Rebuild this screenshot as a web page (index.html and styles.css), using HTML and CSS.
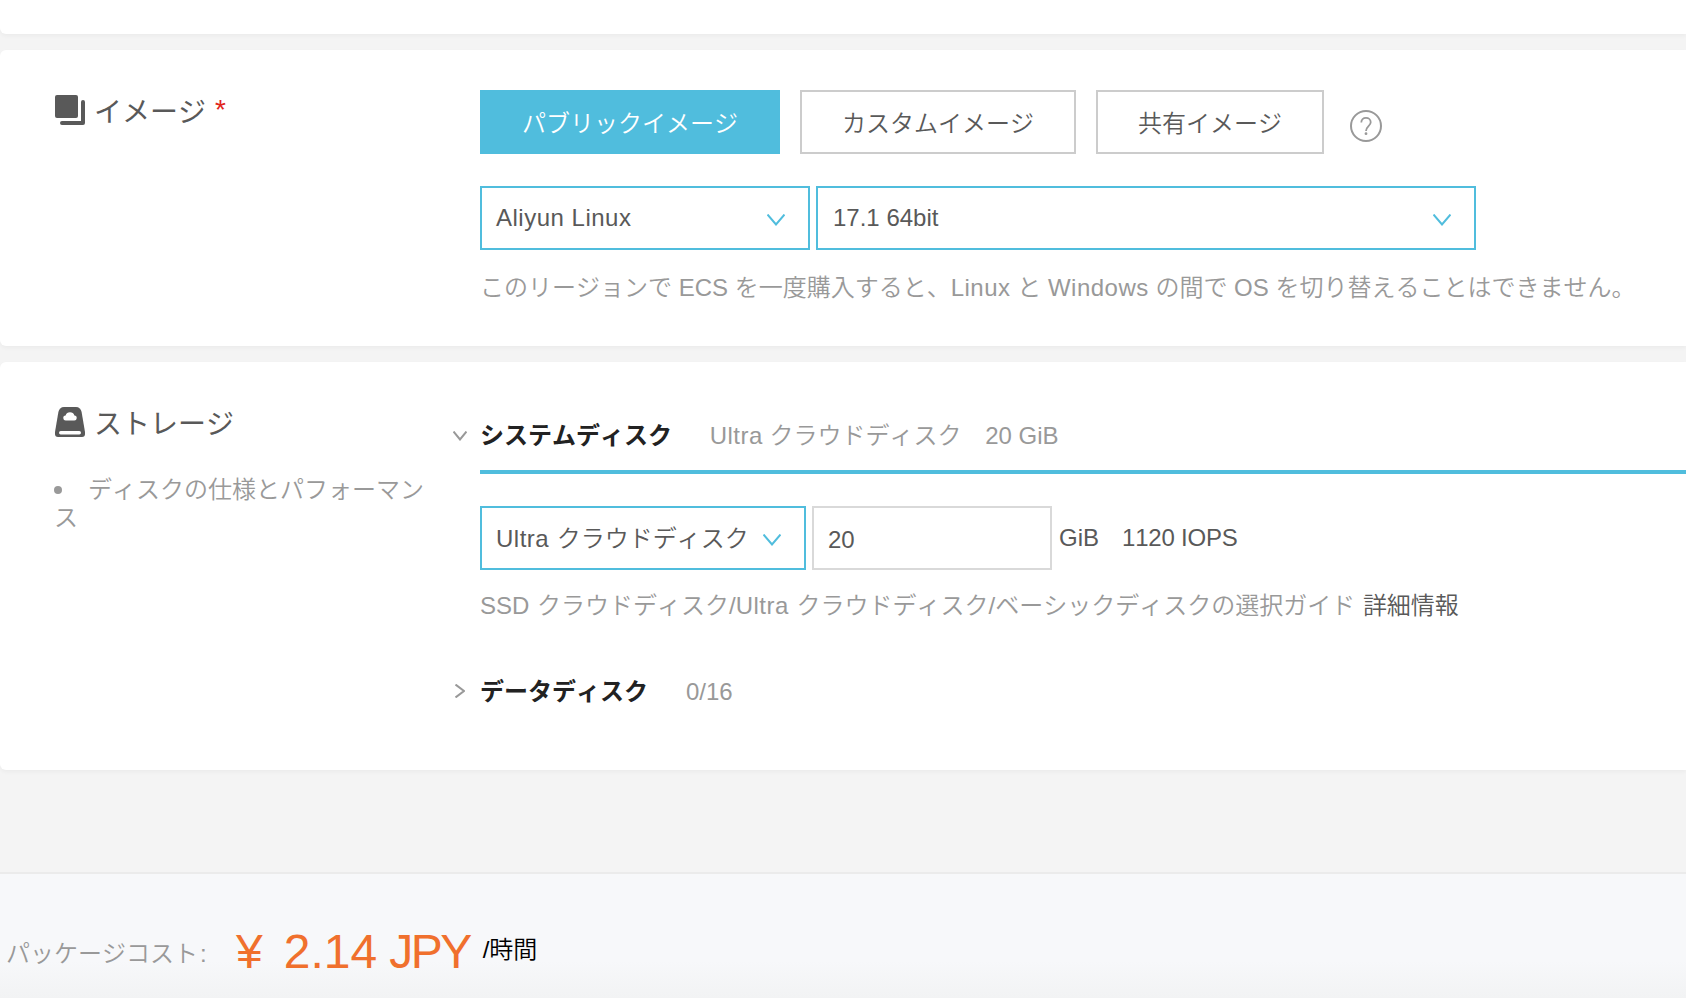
FILE: index.html
```html
<!DOCTYPE html>
<html lang="ja">

<head>
    <meta charset="UTF-8">
    <meta name="viewport" content="width=device-width, initial-scale=1.0">
    <title>ECS 購入</title>
    <link rel="stylesheet" href="styles.css">
</head>

<body>

    <div class="card card-prev"></div>

    <!-- イメージ -->
    <div class="card card-image">
        <div class="label">
            <h2 class="title">
                <svg class="title-icon" width="30" height="30" viewBox="0 0 30 30">
                    <rect x="0" y="0" width="23" height="23" rx="2" fill="#595959"/>
                    <path d="M28 7v21H7" fill="none" stroke="#595959" stroke-width="4" stroke-linecap="round" stroke-linejoin="round"/>
                </svg>
                <span>イメージ</span>
                <span class="required">*</span>
            </h2>
        </div>
        <div class="content">
            <div class="buttons">
                <button class="btn btn-active">パブリックイメージ</button>
                <button class="btn">カスタムイメージ</button>
                <button class="btn">共有イメージ</button>
                <svg class="help" width="32" height="32" viewBox="0 0 32 32" fill="none" stroke="#999" stroke-width="2">
                    <circle cx="16" cy="16" r="15"/>
                    <path d="M11.3 12.6c0-3 2-4.7 4.7-4.7s4.7 1.8 4.7 4.3c0 3.8-4.7 4.3-4.7 8.9" stroke-width="1.8"/>
                    <circle cx="16" cy="23.7" r="1.4" fill="#999" stroke="none"/>
                </svg>
            </div>
            <div class="fields">
                <div class="select select-os">
                    <span class="spaced">Aliyun Linux</span>
                    <svg class="arrow" width="18" height="12" viewBox="0 0 18 12"><path d="M0.500 0.500l8.500 10L17.500 0.500"/></svg>
                </div>
                <div class="select select-version">
                    <span>17.1 64bit</span>
                    <svg class="arrow" width="18" height="12" viewBox="0 0 18 12"><path d="M0.500 0.500l8.500 10L17.500 0.500"/></svg>
                </div>
            </div>
            <p class="note note-image">このリージョンで ECS を一度購入すると、<span class="spaced">Linux</span> と <span class="spaced">Windows</span> の間で OS を切り替えることはできません。</p>
        </div>
    </div>

    <!-- ストレージ -->
    <div class="card card-storage">
        <div class="label">
            <h2 class="title">
                <svg class="title-icon" width="30" height="30" viewBox="0 0 30 30">
                    <path d="M9 0h12c3 0 5 2 5.600 5L30 25v2q0 3-3 3H3q-3 0-3-3v-2L3.400 5C4 2 6 0 9 0z" fill="#595959"/>
                    <path d="M11 13.500a2.500 2.500 0 0 1-.4-5 4.600 4.600 0 0 1 8.800 0 2.500 2.500 0 0 1-.4 5z" fill="#fff"/>
                    <rect x="4" y="24" width="22" height="3.500" rx="1.700" fill="#fff"/>
                </svg>
                <span>ストレージ</span>
            </h2>
            <p class="link"><span class="dot"></span>ディスクの仕様とパフォーマンス</p>
        </div>
        <div class="content">
            <div class="disk-head disk-system">
                <svg class="toggle" width="14" height="10" viewBox="0 0 14 10"><path d="M0.500 0.500l6.500 8L13.500 0.500"/></svg>
                <div class="disk-line">
                    <strong>システムディスク</strong>
                    <span class="disk-type"><span class="spaced">Ultra</span> クラウドディスク</span>
                    <span class="disk-size">20 GiB</span>
                </div>
            </div>
            <div class="fields">
                <div class="select select-disk">
                    <span><span class="spaced">Ultra</span> クラウドディスク</span>
                    <svg class="arrow" width="18" height="12" viewBox="0 0 18 12"><path d="M0.500 0.500l8.500 10L17.500 0.500"/></svg>
                </div>
                <input class="size-input" type="text" value="20">
                <span class="unit">GiB</span>
                <span class="iops">1120 IOPS</span>
            </div>
            <p class="note note-disk">SSD クラウドディスク/<span class="spaced">Ultra</span> クラウドディスク/ベーシックディスクの選択ガイド <a class="more">詳細情報</a></p>
            <div class="disk-head disk-data">
                <svg class="toggle" width="10" height="14" viewBox="0 0 10 14"><path d="M0.500 0.500l8.500 6.500-8.500 6.500"/></svg>
                <strong>データディスク</strong>
                <span class="disk-count">0/16</span>
            </div>
        </div>
    </div>

    <!-- 料金 -->
    <div class="footer">
        <span class="cost-label">パッケージコスト<span class="colon">:</span></span>
        <span class="yen">¥</span>
        <span class="price">2.14</span>
        <span class="currency">JPY</span>
        <span class="per">/時間</span>
    </div>

</body>

</html>
```
FILE: styles.css
```css
* {
    margin: 0;
    padding: 0;
    box-sizing: border-box;
}

body {
    display: flex;
    flex-direction: column;
    height: 998px;
    overflow: hidden;
    background-color: #f4f4f4;
    font-family: "Liberation Sans", "Noto Sans CJK JP", sans-serif;
    font-size: 24px;
    font-weight: 350;
    font-kerning: none;
    color: #595959;
    white-space: nowrap;
}

.card {
    display: flex;
    flex-shrink: 0;
    padding: 40px 0 0 55px;
    background: white;
    border-radius: 6px 0 0 6px;
    box-shadow: 0 2px 4px rgba(0, 0, 0, 0.04);
}

.card-prev {
    height: 34px;
    padding: 0;
    margin-bottom: 16px;
    border-radius: 0 0 0 6px;
}

.card-image {
    height: 296px;
    margin-bottom: 16px;
}

.card-storage {
    height: 408px;
    margin-bottom: 102px;
}

.label {
    width: 376px;
    margin-right: 49px;
    flex-shrink: 0;
}

.content {
    flex: 1;
    min-width: 0;
}

.title {
    display: flex;
    align-items: center;
    height: 40px;
    font-size: 28px;
    font-weight: 400;
}

.title-icon {
    margin-right: 9px;
}

.required {
    margin-left: 9px;
    color: #e1251b;
}

.link {
    margin: 34px 0 0 -1px;
    line-height: 28px;
    color: #999;
    white-space: normal;
}

.dot {
    display: inline-block;
    width: 8px;
    height: 8px;
    margin-right: 26px;
    border-radius: 50%;
    background: #999;
    vertical-align: 4px;
}

.buttons {
    display: flex;
    align-items: center;
    gap: 20px;
}

.btn {
    height: 64px;
    padding: 0 40px 2px;
    border: 2px solid #ccc;
    background: white;
    color: #595959;
    font: inherit;
    font-kerning: none;
}

.btn-active {
    border-color: #50bddd;
    background: #50bddd;
    color: white;
}

.help {
    margin: 8px 0 0 6px;
}

.fields {
    display: flex;
    align-items: center;
    gap: 6px;
    margin-top: 32px;
}

.select {
    display: flex;
    align-items: center;
    justify-content: space-between;
    height: 64px;
    padding: 0 23px 0 14px;
    border: 2px solid #50bddd;
}

.select-os {
    width: 330px;
}

.select-version {
    width: 660px;
    padding-left: 15px;
}

.select-disk {
    width: 326px;
    padding-bottom: 4px;
    word-spacing: 1px;
}

.arrow,
.toggle {
    flex-shrink: 0;
    fill: none;
    stroke: #50bddd;
    stroke-width: 2;
}

.arrow {
    margin-top: 4px;
}

.select-disk .arrow {
    margin-top: 8px;
}

.toggle {
    stroke: #999;
}

.spaced {
    letter-spacing: 0.5px;
}

.size-input {
    width: 240px;
    height: 64px;
    padding: 3px 14px 0;
    border: 2px solid #d9d9d9;
    font: inherit;
    color: #595959;
}

.unit {
    margin-left: 1px;
}

.iops {
    margin-left: 17px;
    letter-spacing: -0.2px;
}

.note {
    line-height: 36px;
    color: #999;
}

.note-image {
    margin-top: 20px;
}

.note-disk {
    margin-top: 18px;
    word-spacing: 1px;
}

.more {
    color: #595959;
}

.disk-head {
    display: flex;
    align-items: center;
    margin-left: -27px;
    color: #999;
}

.disk-head strong {
    color: #222;
    font-weight: 700;
}

.disk-system .toggle {
    margin: 0 13px 4px 0;
}

.disk-line {
    flex: 1;
    height: 72px;
    line-height: 68px;
    border-bottom: 4px solid #50bddd;
}

.disk-type {
    margin-left: 31px;
}

.disk-size {
    margin-left: 17px;
}

.disk-data {
    height: 40px;
    margin-top: 47px;
}

.disk-data .toggle {
    margin: 0 15px 0 2px;
}

.disk-data strong {
    margin-bottom: 4px;
}

.disk-count {
    margin: 2px 0 0 38px;
}

.footer {
    display: flex;
    align-items: flex-start;
    flex: 1;
    padding: 50px 0 0 7px;
    border-top: 2px solid #ebebeb;
    background: linear-gradient(#f7f8fa 70%, #f2f3f4);
    color: #999;
}

.cost-label {
    width: 202px;
    margin: 12px 28px 0 -1px;
    line-height: 36px;
}

.colon {
    margin-left: 2px;
}

.yen,
.price,
.currency {
    color: #f0702d;
    font-size: 48px;
    line-height: 56px;
}

.price {
    margin-left: 21px;
}

.currency {
    margin-left: 12px;
    letter-spacing: -2.500px;
}

.per {
    margin: 8px 0 0 13px;
    line-height: 36px;
    color: #000;
}
```
